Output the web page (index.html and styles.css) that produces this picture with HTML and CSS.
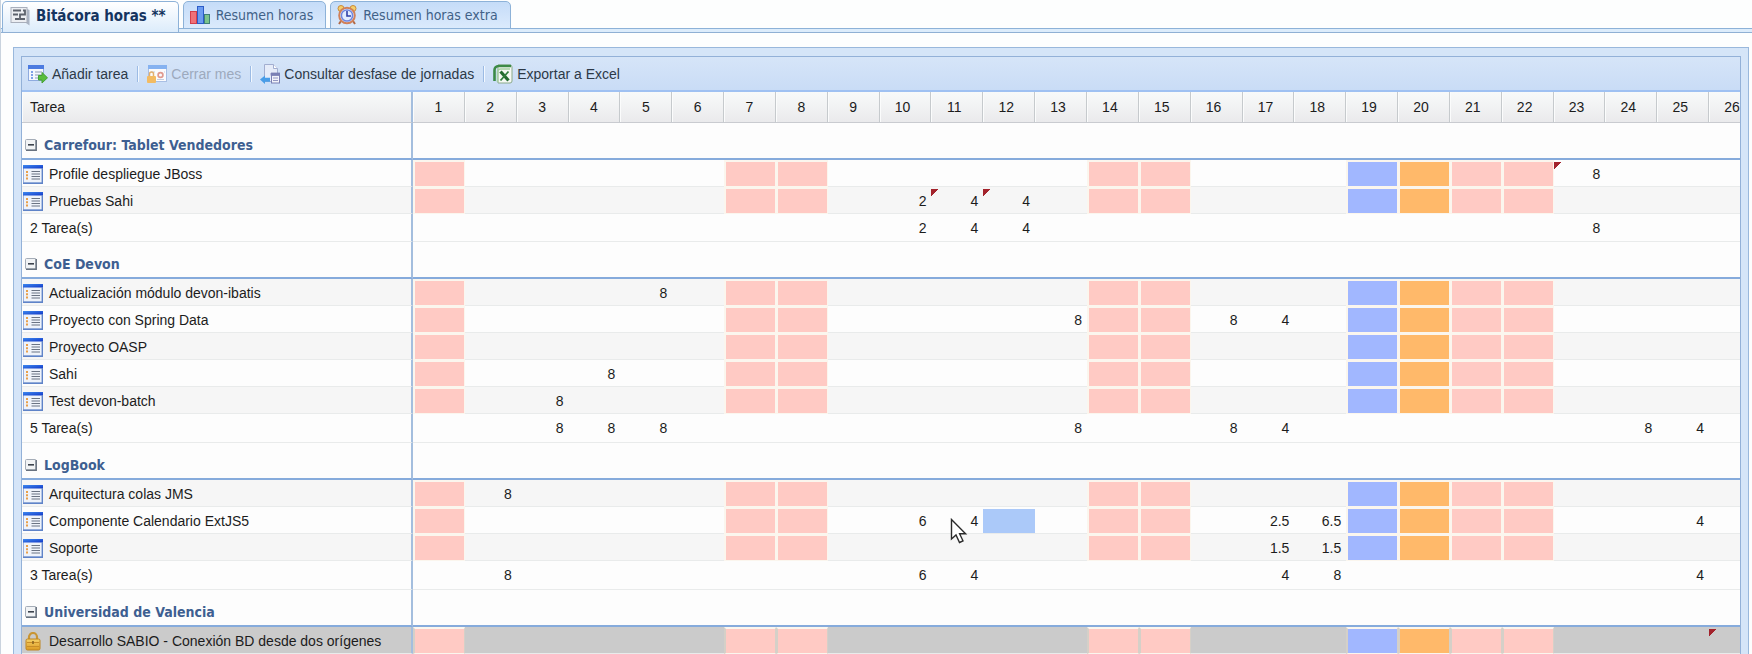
FILE: index.html
```html
<!DOCTYPE html>
<html lang="es">
<head>
<meta charset="utf-8">
<title>Bitácora horas</title>
<link rel="stylesheet" href="styles.css">
</head>
<body>
<svg class="sprite" aria-hidden="true">
  <linearGradient id="grad-bar" x1="0" y1="0" x2="1" y2="1">
    <stop offset="0" stop-color="#3f8af0"/><stop offset="1" stop-color="#1238c8"/>
  </linearGradient>
  <linearGradient id="grad-gold" x1="0" y1="0" x2="0" y2="1">
    <stop offset="0" stop-color="#f6d268"/><stop offset="1" stop-color="#dc9a22"/>
  </linearGradient>
  <symbol id="i-log" viewBox="0 0 20 20">
    <path d="M17 3l2.500 1v15.500l-5-3.500H1z" fill="#aab4c4"/>
    <rect x="1" y="1.500" width="16" height="15" fill="#eceef2" stroke="#a9afbb"/>
    <path d="M3 4.500h8M3 8.500h5M5 13h4M13 4.500h2v4h-5V13h5" fill="none" stroke="#5d626c" stroke-width="1.800"/>
  </symbol>
  <symbol id="i-bars" viewBox="0 0 20 20">
    <rect x=".5" y="6.500" width="6" height="12" fill="#f07078" stroke="#d23f4c"/>
    <rect x="7.500" y="1.500" width="6" height="17" fill="#6c9cf0" stroke="#2c5cc8"/>
    <rect x="14.500" y="9.500" width="5" height="9" fill="#7cc48c" stroke="#3f7f7a"/>
  </symbol>
  <symbol id="i-clock" viewBox="0 0 20 20">
    <path d="M4 16l-2 3M16 16l2 3" stroke="#b06a48" stroke-width="2"/>
    <circle cx="4" cy="3.500" r="3" fill="#f4cf6a" stroke="#c98a3a"/>
    <circle cx="16" cy="3.500" r="3" fill="#f4cf6a" stroke="#c98a3a"/>
    <circle cx="10" cy="10.500" r="7.800" fill="#e2ecff" stroke="#d0805a" stroke-width="2"/>
    <circle cx="10" cy="10.500" r="5.600" fill="none" stroke="#6f86de" stroke-width="1.500"/>
    <path d="M10 6v5h4" fill="none" stroke="#2f3fa8" stroke-width="1.600"/>
  </symbol>
  <symbol id="i-add" viewBox="0 0 20 20">
    <rect x=".5" y="1.500" width="15" height="15" fill="#f4f7fd" stroke="#8fabdf"/>
    <path d="M0 1h16v4H0z" fill="#4c7be0"/>
    <path d="M3 8h2M3 11h2M3 14h2" stroke="#5a86e0" stroke-width="1.600"/>
    <path d="M7 8h7M7 11h7M7 14h4" stroke="#8d9bb5"/>
    <path d="M10.500 11.500H14V8.500l5.500 5.300-5.500 5.200v-3h-3.500z" fill="#58bd3d" stroke="#45a035"/>
  </symbol>
  <symbol id="i-close" viewBox="0 0 20 20">
    <rect x="1.500" y="1.500" width="18" height="16" fill="#fbfbfd" stroke="#a9bfe4"/>
    <path d="M1 1h19v4H1z" fill="#86b2f0"/>
    <path d="M4 8h4M17 8h1M10 15.500h7" stroke="#c3cde0"/>
    <circle cx="13.500" cy="11" r="2.400" fill="none" stroke="#e09a90" stroke-width="1.700"/>
    <path d="M2.500 12v-2a2 2 0 0 1 4 0v2" fill="none" stroke="#e2b070" stroke-width="1.500"/>
    <rect x="0" y="12" width="9" height="7" rx="1" fill="#f3bb62"/>
  </symbol>
  <symbol id="i-query" viewBox="0 0 20 20">
    <path d="M4.500.5h9l4 4v13h-13z" fill="#e6ecf9" stroke="#a2aed0"/>
    <path d="M13.500.5v4h4" fill="#fff" stroke="#a2aed0"/>
    <rect x="11.500" y="9.500" width="8" height="9.500" fill="#f2f3fa" stroke="#7b80b4"/>
    <path d="M11 9h9v2.500h-9zM13 14h5M13 16.500h5" fill="#7b80b4" stroke="#7b80b4" stroke-width=".8"/>
    <path d="M0 15.500l5-4v2.200h5v4h-5V20z" fill="#489de8"/>
  </symbol>
  <symbol id="i-excel" viewBox="0 0 20 20">
    <path d="M5 1h12a2 2 0 0 1 2 2v14a2 2 0 0 1-2 2H5z" fill="#f5f9f4" stroke="#8aa98a"/>
    <path d="M1.500 17V6a4 4 0 0 1 4-4H18" fill="none" stroke="#3c8a46" stroke-width="2.600"/>
    <path d="M4.500 18V8a3 3 0 0 1 3-3H17" fill="none" stroke="#a5cfa0" stroke-width="1.500"/>
    <path d="M7.500 7.500l8 9" stroke="#246b30" stroke-width="3.200"/>
    <path d="M15.500 7.500l-8 9" stroke="#2f7e3b" stroke-width="1.800"/>
  </symbol>
  <symbol id="i-task" viewBox="0 0 20 19">
    <rect x=".5" y=".5" width="19" height="17.500" fill="#eff3fa" stroke="#9ab1de"/>
    <path d="M0 0h20v3.500H0z" fill="url(#grad-bar)"/>
    <path d="M19.300 3v15.200H0" fill="none" stroke="#5f83c8" stroke-width="1.400"/>
    <path d="M3 6h2v2H3zM3 9.300h2v2H3zM3 12.600h2v2H3z" fill="#e9a04a"/>
    <path d="M8.500 6.500h8.500M8.500 9h8.500M8.500 11.500h8.500M8.500 14h8.500" stroke="#6b7483" stroke-width="1.200"/>
  </symbol>
  <symbol id="i-lock" viewBox="0 0 20 19">
    <path d="M6 8V5a4 4 0 0 1 8 0v3" fill="none" stroke="#c99534" stroke-width="2.200"/>
    <rect x="3" y="7" width="14" height="11" rx="1.500" fill="url(#grad-gold)" stroke="#bd8523"/>
    <path d="M4 10.500h12M4 14.500h12" stroke="#c98d28"/>
    <path d="M10 9v3" stroke="#8b6420" stroke-width="1.600"/>
  </symbol>
  <symbol id="i-minus" viewBox="0 0 12 12">
    <rect x=".5" y=".5" width="10.500" height="10.500" rx="1" fill="#f1f3f5" stroke="#a5adb8"/>
    <path d="M11.200 1v10.200H1" fill="none" stroke="#68727f" stroke-width="1.500"/>
    <path d="M3 5.800h6" stroke="#3d444e" stroke-width="1.600"/>
  </symbol>
</svg>

<nav class="tabs" role="tablist">
  <button class="tab tab-active" type="button" role="tab" aria-selected="true"><svg class="icon"><use href="#i-log"/></svg>Bitácora horas **</button>
  <button class="tab" type="button" role="tab"><svg class="icon"><use href="#i-bars"/></svg>Resumen horas</button>
  <button class="tab" type="button" role="tab"><svg class="icon"><use href="#i-clock"/></svg>Resumen horas extra</button>
</nav>

<main class="page">
  <div class="frame">
    <section class="panel">
      <div class="toolbar" role="toolbar">
        <button class="tool" type="button"><svg class="icon"><use href="#i-add"/></svg>Añadir tarea</button>
        <span class="sep"></span>
        <button class="tool" type="button" disabled><svg class="icon"><use href="#i-close"/></svg>Cerrar mes</button>
        <span class="sep"></span>
        <button class="tool" type="button"><svg class="icon"><use href="#i-query"/></svg>Consultar desfase de jornadas</button>
        <span class="sep"></span>
        <button class="tool" type="button"><svg class="icon"><use href="#i-excel"/></svg>Exportar a Excel</button>
      </div>
      <div class="scroller">
        <table class="grid">
          <colgroup id="columns"><col class="col-task"></colgroup>
          <thead><tr id="days"><th class="task-head" scope="col">Tarea</th></tr></thead>
          <tbody id="rows"></tbody>
        </table>
      </div>
    </section>
  </div>
</main>
<svg class="pointer" viewBox="0 0 18 26" aria-hidden="true"><path d="M1.500 1.500v19.500l4.500-4 3.500 7.500 3.500-1.700-3.400-7.100h6z" fill="#fff" stroke="#2b2b2b" stroke-width="1.400"/></svg>
<script src="app.js"></script>
</body>
</html>
```
FILE: styles.css
```css
* {
  box-sizing: border-box;
}

body {
  margin: 0;
  min-height: 100vh;
  overflow: hidden;
  background: #fdfefe;
  border-left: 1px solid #c9d3de;
  font: 14px/18px "Liberation Sans", Arial, sans-serif;
  color: #1c1c1c;
}

button {
  font: inherit;
  color: inherit;
  border: 0;
  padding: 0;
  background: none;
}

.sprite {
  position: absolute;
  width: 0;
  height: 0;
}

.icon {
  width: 20px;
  height: 20px;
  flex: none;
}

/* Tabs */
.tabs {
  display: flex;
  gap: 4px;
  height: 33px;
  padding: 1px 1px 0;
  background: linear-gradient(#fdfefe 28px, #8db2d8 28px, #8db2d8 29px, #dcecfb 29px, #dcecfb 32px, #8fb0d4 32px);
}

.tab {
  display: flex;
  align-items: center;
  gap: 6px;
  height: 28px;
  padding: 0 12px 0 6px;
  border: 1px solid #8db2d8;
  border-radius: 5px 5px 0 0;
  background: linear-gradient(#c5dcf8, #dbeafc);
  color: #416187;
  font: 14px/20px "DejaVu Sans Condensed", sans-serif;
}

.tab-active {
  height: 31px;
  padding: 0 12px 3px 7px;
  border-bottom: 0;
  background: linear-gradient(#ffffff, #dcecfb);
  color: #15345f;
  font-size: 15px;
  font-weight: 700;
}

/* Panel */
.page {
  padding: 14px 3px 0 12px;
}

.frame {
  padding: 8px 7px 0;
  border: 1px solid #99b8dc;
  border-bottom: 0;
  background: #d5e5f8;
}

.panel {
  border: 1px solid #93b1d8;
  border-bottom: 0;
  background: #fdfdfd;
}

.toolbar {
  display: flex;
  align-items: center;
  height: 35px;
  padding: 0 6px;
  border-bottom: 2px solid #9fc1f2;
  background: linear-gradient(#d6e5f8, #c9dcf6);
}

.tool {
  display: flex;
  align-items: center;
  gap: 4px;
  height: 24px;
  color: #2c3947;
}

.tool:disabled {
  color: #9daabd;
}

.sep {
  width: 2px;
  height: 16px;
  margin: 0 8px 0 9px;
  border-left: 1px solid #9cbbe4;
  border-right: 1px solid #f2f8ff;
}

/* Grid */
.scroller {
  overflow: hidden;
}

.grid {
  width: calc(100% + 21px);
  table-layout: fixed;
  border-collapse: separate;
  border-spacing: 0;
}

.col-task {
  width: 391px;
}

th,
td {
  padding: 0;
  white-space: nowrap;
  font-weight: 400;
}

thead th {
  height: 31px;
  border-right: 1px solid #c6cacd;
  border-bottom: 1px solid #c9cbd0;
  box-shadow: inset 1px 0 #fbfcfc;
  background: linear-gradient(#f8fafa, #eaeaec);
  text-align: center;
}

thead .two-digits {
  padding-right: 5px;
}

thead .task-head {
  padding-left: 8px;
  text-align: left;
}

thead .task-head,
tbody th {
  border-right: 2px solid #a4bede;
}

tbody th {
  text-align: left;
}

.group th,
.group td {
  height: 37px;
  border-bottom: 2px solid #86abdc;
}

.group th {
  padding: 8px 0 0 3px;
}

.toggle {
  display: flex;
  align-items: center;
  gap: 7px;
  color: #3e5f91;
  font: 700 14px/20px "DejaVu Sans Condensed", sans-serif;
}

.toggle svg {
  width: 12px;
  height: 12px;
}

.task th,
.task td {
  height: 27px;
  border-bottom: 1px solid #e9ebeb;
}

.task th,
.task .hours {
  padding-top: 2px;
}

.total th,
.total td {
  height: 29px;
  border-bottom: 1px solid #e9ebeb;
}

tr.total:nth-child(4) > * {
  height: 28px;
}

.total th {
  padding-left: 8px;
}

.task-name {
  display: flex;
  align-items: center;
  gap: 6px;
  padding-left: 1px;
}

.task-name svg {
  width: 20px;
  height: 19px;
}

.hours {
  padding-right: 5px;
  text-align: right;
}

.alt {
  background: #f6f6f6;
}

.closed {
  background: #cbcbcb;
}

.task .festive,
.task .local,
.task .holiday {
  border: 1px solid #fbf6ee;
  border-width: 2px 1px 1px 2px;
}

.task .festive {
  background: #ffcac4;
}

.task .local {
  background: #a1b7ff;
}

.task .holiday {
  background: #ffb96a;
}

.closed .festive,
.closed .local,
.closed .holiday {
  border-left-color: #d5d0c8;
  border-right-color: #d5d0c8;
}

.selected {
  background: linear-gradient(#fdfdfd 2px, #abc9f9 2px);
}

.note {
  background: linear-gradient(135deg, #a3232c 5px, transparent 5px) no-repeat 0 2px;
}

.pointer {
  position: absolute;
  left: 950px;
  top: 518px;
  width: 18px;
  height: 26px;
}
```
FILE: app.js
```js
const DAYS = 26;
const CALENDAR = { 1: "festive", 7: "festive", 8: "festive", 14: "festive", 15: "festive",
  19: "local", 20: "holiday", 21: "festive", 22: "festive" };

const GROUPS = [
  { name: "Carrefour: Tablet Vendedores",
    tasks: [
      { name: "Profile despliegue JBoss", hours: { 23: "8" }, notes: [23] },
      { name: "Pruebas Sahi", hours: { 10: "2", 11: "4", 12: "4" }, notes: [11, 12], alt: true }
    ],
    total: { 10: "2", 11: "4", 12: "4", 23: "8" } },
  { name: "CoE Devon",
    tasks: [
      { name: "Actualización módulo devon-ibatis", hours: { 5: "8" }, alt: true },
      { name: "Proyecto con Spring Data", hours: { 13: "8", 16: "8", 17: "4" } },
      { name: "Proyecto OASP", hours: {}, alt: true },
      { name: "Sahi", hours: { 4: "8" } },
      { name: "Test devon-batch", hours: { 3: "8" }, alt: true }
    ],
    total: { 3: "8", 4: "8", 5: "8", 13: "8", 16: "8", 17: "4", 24: "8", 25: "4" } },
  { name: "LogBook",
    tasks: [
      { name: "Arquitectura colas JMS", hours: { 2: "8" }, alt: true },
      { name: "Componente Calendario ExtJS5", hours: { 10: "6", 11: "4", 17: "2.5", 18: "6.5", 25: "4" }, selected: 12 },
      { name: "Soporte", hours: { 17: "1.5", 18: "1.5" }, alt: true }
    ],
    total: { 2: "8", 10: "6", 11: "4", 17: "4", 18: "8", 25: "4" } },
  { name: "Universidad de Valencia",
    tasks: [
      { name: "Desarrollo SABIO - Conexión BD desde dos orígenes", hours: {}, notes: [26], closed: true }
    ] }
];

function dayCells(hours, classFor) {
  let html = "";
  for (let day = 1; day <= DAYS; day++) {
    html += `<td class="hours ${classFor(day)}">${hours[day] || ""}</td>`;
  }
  return html;
}

let rows = "";
for (const group of GROUPS) {
  rows += `<tr class="group"><th scope="rowgroup"><button class="toggle" type="button"><svg><use href="#i-minus"/></svg>${group.name}</button></th><td colspan="${DAYS}"></td></tr>`;
  for (const task of group.tasks) {
    const tone = task.closed ? " closed" : task.alt ? " alt" : "";
    const icon = task.closed ? "i-lock" : "i-task";
    const cells = dayCells(task.hours, day =>
      [CALENDAR[day] || "", (task.notes || []).includes(day) ? "note" : "", task.selected === day ? "selected" : ""].join(" ").trim());
    rows += `<tr class="task${tone}"><th scope="row"><span class="task-name"><svg><use href="#${icon}"/></svg>${task.name}</span></th>${cells}</tr>`;
  }
  if (group.total) {
    rows += `<tr class="total"><th scope="row">${group.tasks.length} Tarea(s)</th>${dayCells(group.total, () => "")}</tr>`;
  }
}
document.getElementById("rows").innerHTML = rows;

let head = "";
let cols = "";
for (let day = 1; day <= DAYS; day++) {
  head += `<th scope="col"${day > 9 ? ' class="two-digits"' : ""}>${day}</th>`;
  cols += "<col>";
}
document.getElementById("days").insertAdjacentHTML("beforeend", head);
document.getElementById("columns").insertAdjacentHTML("beforeend", cols);
```
